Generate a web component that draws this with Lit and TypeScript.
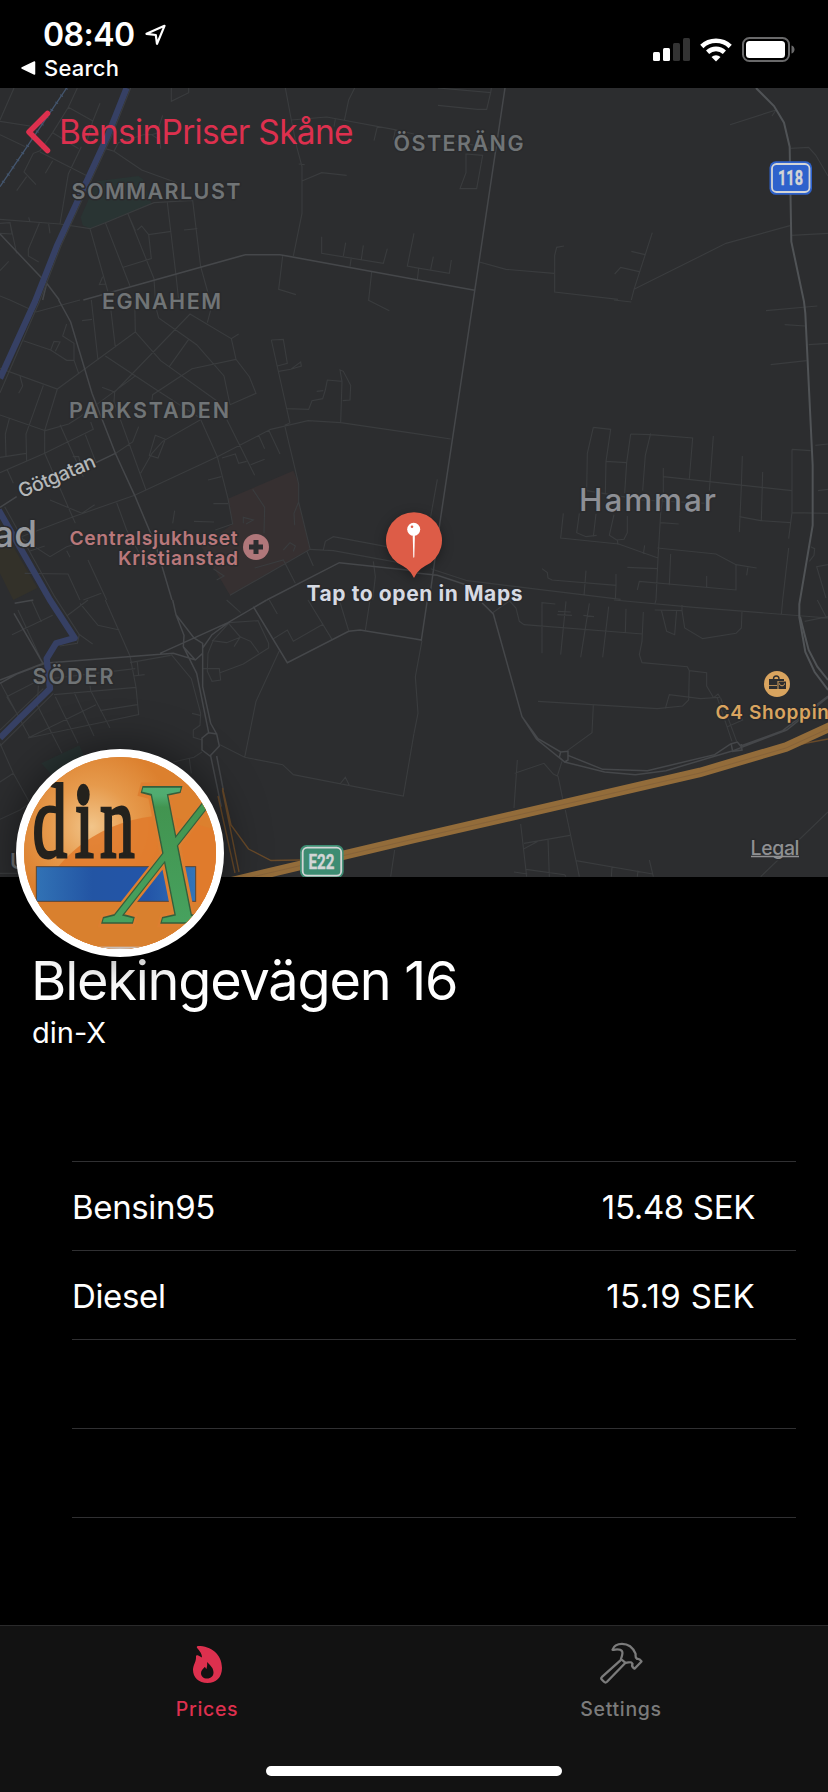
import { LitElement, html, svg, css } from "lit";
import { customElement, state } from "lit/decorators.js";

/* Road geometry, stored per map tile. Each tile is 414x300 px, drawn at a third of its own units. */
interface Tile {
  x: number;
  y: number;
  minor: string;
  major: string;
}

const TILES: Tile[] = [
  {
    x: 0,
    y: 0,
    minor:
      "M42 264L0 360 M232 264L205 322L158 398L120 452L100 460L72 516L108 554 M205 322L280 364 M300 310L278 364L262 420 M158 398L236 446 M0 364L90 378 M0 404L76 440 M120 456L262 528 M158 482L136 520 M80 530L50 572 M244 440L205 522L180 672 M0 658L180 672L270 686L316 668L462 608L578 601 M488 346L470 400L455 404L480 420L482 446 M430 404L455 404 M342 454L355 428L430 404 M316 446L342 454L425 510L530 548 M514 264L514 304L566 278L566 264 M270 686L324 876 M316 668L390 858 M384 642L462 836L466 900 M502 608L528 826L536 900 M578 601L602 800L630 900 M412 690L425 678L446 704L514 694 M446 704L454 776L370 802 M406 692L384 642 M552 690L592 686 M118 670L85 748L85 768L116 786 M86 652L90 666 M146 672L150 700 M0 670L30 668L36 702L0 700 M30 668L50 760 M26 784L0 812 M308 830L298 854L318 852 M0 888L30 900 M856 264L874 360L890 440L906 500L906 640L880 768 M896 492L914 494 M906 543L965 518L1040 526 M874 360L980 351L1180 388L1242 402 M1064 264L1046 300L1033 362 M1132 380L1122 422 M1006 358L1002 380 M1186 390L1180 420 M848 768L836 868L888 884 M965 710L965 760L1150 790L1162 746 M1037 728L1030 768 M1090 736L1084 778 M1054 772L1050 800 M1115 816L1106 900 M1242 700L1222 798L1242 802",
    major: "M0 702L140 850L178 900 M140 850L128 900 M250 900L736 764L840 764L1242 838",
  },
  {
    x: 414,
    y: 0,
    minor:
      "M72 264L230 278L232 264 M230 278L218 328L190 328L72 316 M0 408L100 420L232 446 M156 462L206 466L188 566L138 566L156 518Z M0 802L106 820L112 780 M58 770L50 808 M14 804L10 840 M196 786L276 808L420 820 M450 738L428 742L422 766L422 876L612 898 M715 698L660 868L652 900 M652 754L693 764 M602 822L620 802L676 815 M660 868L936 730L1128 677 M1132 706L1242 700 M948 374L1086 330L1074 348 M1130 445L1184 442L1205 465L1242 528",
    major: "M273 264L178 900 M0 838L182 871",
  },
  {
    x: 0,
    y: 300,
    minor:
      "M0 345L136 392L206 372L238 352L408 226 M0 205L172 267L406 96L404 0 M172 267L134 392L134 460 M130 256L78 402L80 484 M28 356L16 402L18 470 M0 472L78 460 M0 518L134 460L280 388L272 366 M240 0L108 36 M274 0L294 180 M332 24L346 142 M406 96L482 182L650 302 M70 122L152 150L200 181L222 181L236 220 M222 181L222 130L188 108L200 72 M152 150L162 124L180 126L166 154 M60 228L68 258L56 280 M246 62L276 58 M306 262L344 276L570 42L694 116L716 102 M466 16L476 54L590 134L672 228L690 314 M694 116L708 178L748 230L768 280L690 314 M708 178L576 206L458 284L456 300 M566 118L508 200 M316 168L470 270L600 354 M600 360L488 424L456 460L422 520 M466 406L496 418L474 474L448 466Z M344 276L342 306L438 570 M416 380L398 426L344 462 M640 0L622 68 M180 374L250 530 M134 460L226 670 M256 404L288 488 M218 470L236 470L240 486 M22 510L40 550 M404 586L652 470L812 388L924 362L1022 368L1242 400 M404 586L220 650L60 712 M600 354L652 470L684 596 M680 358L764 526 M752 494L794 478 M666 474L706 462L716 490L740 484 M624 540L664 530 M640 611L684 611 M776 406L794 446 M806 390L840 462 M854 376L868 370 M814 120L850 118L862 190L832 198 M814 120L870 370 M836 214L872 208L902 186L904 198L872 208 M858 326L926 328L936 302L968 296L976 270L982 240L1026 244L1020 210L1030 214L1052 256L1050 300L1028 302 M1026 244L1022 368 M950 274L970 272 M854 376L896 552L896 606L882 640L884 676 M896 606L930 746 M758 568L794 622L792 700 M684 596L698 672L646 690 M582 664L642 666 M524 632L518 670 M350 608L380 690L440 800 M730 670L730 652L760 660L738 672 M850 750L870 728L886 738L880 754 M764 804L850 780L886 850 M690 886L930 748L1000 752L1242 796 M970 750L976 724L1000 710L1160 740 M920 752L940 798 M1120 784L1126 830L1118 900 M60 712L150 770L200 740L240 728 M74 820L204 822L240 900 M88 754L134 738 M150 600L246 640L284 614 M200 752L210 772 M304 880L250 900 M640 806L672 828L650 840 M1104 0L1168 32 M30 0L108 36 M264 780L320 900",
    major:
      "M176 0L212 66L276 280L346 460L404 586L468 738L516 900 M288 488L346 460 M0 622L50 590 M800 900L1018 788L1242 812",
  },
  {
    x: 414,
    y: 300,
    minor:
      "M600 0L652 6 M1056 32L1210 18 M1112 74L1174 78 M1184 134L1242 130 M1070 194L1178 182 M1204 436L1242 432 M1212 572L1242 568 M0 400L110 417 M70 538L50 650 M538 382L590 388L576 484L574 580 M538 382L520 460L518 572L640 592 M576 484L638 488 M650 402L710 404L836 414L826 536 M650 402L638 488L632 580 M710 400L694 466L686 572 M748 504L748 580L740 640L732 775L726 900 M748 530L1134 572 M898 408L886 572 M985 468L982 560L976 696 M1046 516L1042 662 M976 650L1040 662L1130 668 M740 668L794 672 M1134 448L1190 452 M1134 448L1134 638L1124 716 M1134 638L1242 640 M1124 744L1106 900 M448 640L440 714L614 732L732 774 M496 640L488 698L516 710L548 706 M546 642L538 710 M600 644L586 706L608 720L630 718L640 698L640 648 M610 720L612 734 M692 736L688 762 M640 802L732 806 M730 744L906 762L966 794L1028 804 M1002 800L998 826 M966 794L966 870L676 844L670 870 M770 762L766 856 M878 828L878 864 M384 806L400 818L402 834L414 840L606 856L604 900 M516 812L510 888 M606 822L606 856 M50 806L160 842L620 898 M1190 740L1202 746L1200 766L1186 784 M1242 794L1208 800L1236 894 M680 600L880 610",
    major: "M178 0L78 666L46 900 M0 818L70 826L160 856",
  },
  {
    x: 0,
    y: 600,
    minor:
      "M94 0L124 66 M36 104L158 46 M200 48L264 0 M240 10L294 76L358 90 M316 0L390 168L408 262L416 344L84 414 M236 102L278 132 M54 30L120 172 M390 188L512 166 M400 228L434 224 M412 186L416 228 M162 284L408 262 M270 256L272 272L330 384 M300 332L412 314 M222 276L282 408 M166 290L234 430 M118 200L112 316L186 460 M0 246L90 414 M20 290L118 240L406 206 M288 314L84 414 M60 356L20 290 M0 430L40 520L90 610 M40 520L0 546 M0 658L60 630L90 610 M514 164L574 236L602 340L600 376L580 390L580 412L606 420 M576 340L600 346 M606 206L658 206L662 240L636 244L622 214L624 160L640 120L688 68L774 62L806 130L806 144L730 192L660 218 M684 68L720 110L752 124L776 158 M636 122L680 128L720 112L702 140 M680 0L722 38 M808 0L832 42 M818 118L862 90L880 124L970 72 M924 0L996 118 M1018 0L1046 92 M1110 0L1096 92 M838 152L768 304L734 472 M660 434L734 472L848 494L880 524L1210 588L1242 400 M1020 552L1036 532L1048 556 M606 456L582 472L520 486 M568 476L574 520 M1184 750L1172 830 M0 820L60 820",
    major:
      "M42 40L130 192 M0 240L130 190L520 160L586 180L608 160L608 130L582 114L528 44L518 0 M528 44L552 106L550 140L586 180 M480 160L684 68L800 0 M608 144L636 104L688 66 M550 140L590 220L626 398L606 414L606 450L630 468L658 438L650 402L626 398 M608 160L608 260L632 370L650 402 M632 468L664 620 M650 468L670 570 M760 20L862 188L1046 94L1080 90L1242 116 M100 0L44 10 M0 250L50 222L136 190",
  },
  {
    x: 414,
    y: 600,
    minor:
      "M0 400L12 340L4 230L24 122 M284 0L306 24L316 64L330 74L686 102 M236 38L290 0 M384 160L384 8L424 12 M456 4L440 164 M526 10L500 172 M584 20L566 172 M636 26L634 98 M688 36L684 124L676 164L684 188L820 200L826 212L878 218L878 258L898 292 M432 34L470 36 M430 44L474 46 M508 46L540 50 M600 0L840 22L1242 54 M722 30L804 32L812 84L866 116L966 100L982 84L984 34 M742 30L758 94L782 104L788 30 M804 16L804 32 M726 0L722 14 M1106 0L1102 44 M1210 0L1236 50 M826 212L824 300L806 318L730 326L372 304 M538 314L534 398L460 452 M754 326L766 284L860 296L918 292L912 282L900 292 M910 294L954 424 M920 294L968 424 M940 380L986 360L974 344 M300 624L310 480 M302 520L390 490L418 522L430 528L444 484 M432 528L446 596 M454 630L496 830 M320 672L338 830 M330 730L468 706 M330 746L372 724 M402 718L406 830 M300 816L340 822 M336 808L452 824L456 830 M486 782L716 822 M594 802L592 830 M706 780L718 830 M672 812L670 830 M1040 830L1242 636 M1172 64L1242 50",
    major:
      "M204 8L238 42L324 350L372 416L440 456L462 454L462 480L452 486L436 472L440 456 M324 350L368 418L452 486L572 516L664 524L756 512L952 454L1118 390L1242 292 M462 466L566 508L700 512L902 464L950 432L970 426L980 438L1106 392L1242 288 M952 434L956 454L984 450L982 432 M40 0L22 120L0 116",
  },
];

@customElement("station-map")
class StationMap extends LitElement {
  static styles = css`
    :host {
      display: block;
      height: 789px;
      overflow: hidden;
      background: #2c2d2f;
    }
    svg {
      display: block;
    }
    text {
      font-family: Inter, "Liberation Sans", sans-serif;
    }
    .minor {
      fill: none;
      stroke: #3a3c3e;
      stroke-width: 3.4;
    }
    .major {
      fill: none;
      stroke: #45474a;
      stroke-width: 4.5;
    }
    .trunk {
      fill: none;
      stroke: #505356;
      stroke-width: 6;
    }
    .water {
      fill: none;
      stroke: #364064;
      stroke-linejoin: round;
    }
    .motorway {
      fill: none;
      stroke: #936c3a;
    }
    .ramp {
      fill: none;
      stroke: #694a29;
      stroke-width: 1.4;
    }
    .area {
      font-size: 21.5px;
      font-weight: 600;
      fill: #707476;
    }
    .halo {
      paint-order: stroke;
      stroke: #292a2c;
      stroke-width: 3px;
      stroke-linejoin: round;
    }
    .town {
      font-size: 31.5px;
      font-weight: 500;
      fill: #8d8f95;
    }
    .city {
      font-size: 37px;
      font-weight: 500;
      fill: #96999e;
    }
    .street {
      font-size: 19.5px;
      font-weight: 500;
      fill: #b4b7b9;
    }
    .hospital {
      font-size: 19.3px;
      font-weight: 600;
      fill: #b9787b;
    }
    .shop {
      font-size: 19px;
      font-weight: 600;
      fill: #d9a45f;
    }
    .callout {
      font-size: 21px;
      font-weight: 700;
      fill: #d6dae3;
    }
    .legal {
      font-size: 19.5px;
      font-weight: 500;
      fill: #8f9092;
    }
    .sign {
      font-family: "Roboto", Inter, sans-serif;
      font-size: 20px;
      font-weight: 700;
      fill: #d3d5d6;
      stroke: #d3d5d6;
      stroke-width: 0.4px;
    }
    .pin {
      filter: drop-shadow(0 3px 6px rgba(0, 0, 0, 0.35));
    }
  `;

  private label(cls: string, text: string, x: number, y: number, length: number) {
    return svg`<text class="halo ${cls}" x=${x} y=${y} textLength=${length}>${text}</text>`;
  }

  render() {
    return html`
      <svg width="828" height="789" viewBox="0 88 828 789">
        <g transform="scale(.33333)">
          <path fill="#293433" d="M290 544L415 528L428 536L455 612L272 686L248 676L242 652Z" />
          <path fill="#363031" d="M684 1496L880 1412L896 1450L896 1506L930 1648L690 1786L604 1640L698 1572Z" />
          <path fill="#333129" d="M0 1570L40 1640L112 1764L40 1800L0 1720Z" />
          <path fill="#293433" d="M124 2290L238 2236L262 2290L160 2330Z" />
        </g>
        ${TILES.map(
          (t) => svg`
            <g transform="translate(${t.x} ${t.y}) scale(.33333)">
              <path class="minor" d=${t.minor} />
              <path class="major" d=${t.major} />
            </g>`
        )}
        <g transform="scale(.33333)">
          <path fill="none" stroke="#44566f" stroke-width="4" d="M200 264L100 412L0 560" />
          <path fill="none" stroke="#44566f" stroke-width="10" stroke-dasharray="3 23" d="M200 264L100 412L0 560" />
          <path class="water" stroke-width="19" d="M380 264L322 410L172 735L105 905L0 1135" />
          <path class="minor" stroke="#45474a" d="M392 264L334 410L184 735L118 905L0 1178" />
          <path class="water" stroke-width="19" d="M-4 1530L150 1800L224 1914L168 1930L140 1976L150 2066L60 2154L0 2214" />
          <path class="minor" d="M14 1520L164 1790L238 1904L232 1930L180 1938 M160 2080L0 2238 M0 2190L130 2066" />
          <path class="trunk" d="M2268 264L2322 318L2352 368L2369 440L2374 725L2412 905L2416 940L2438 1395L2438 1576L2398 1812L2398 1852L2416 1956L2444 2016L2484 2070" />
          <path class="trunk" stroke-width="4" d="M2400 1850L2426 1950L2452 2000L2484 2040" />
        </g>
        <path class="ramp" d="M222.500 788L231 825L248.500 849L271 860.500L300 860 M218 796L235 873 M222.500 790L239 872 M796 745L828 739" />
        <path class="motorway" stroke-width="9.500" d="M222 884L414 838.500L700 772.500L786 747L832 726" />
        <path fill="none" stroke="#86633a" stroke-width="1" d="M222 884L414 839L700 773L786 748L832 727" />

        ${this.label("area", "ÖSTERÄNG", 393.5, 150.5, 130)}
        ${this.label("area", "SOMMARLUST", 71.5, 199, 169)}
        ${this.label("area", "EGNAHEM", 102, 308.7, 119)}
        ${this.label("area", "PARKSTADEN", 69, 418, 160)}
        ${this.label("area", "SÖDER", 32.5, 683.7, 81)}
        ${this.label("area", "U", 10, 868.7, 17)}
        ${this.label("town", "Hammar", 579, 510.7, 137)}
        ${this.label("city", "ad", -7, 546.7, 44)}
        <g transform="translate(21.500 498.200) rotate(-22.700)">
          ${this.label("street", "Götgatan", 0, 0, 82)}
        </g>
        ${this.label("hospital", "Centralsjukhuset", 69.5, 545, 168)}
        ${this.label("hospital", "Kristianstad", 118, 564.5, 120)}
        <circle cx="256" cy="547" r="13" fill="#b0777a" />
        <path fill="#2c2d2f" d="M253.500 540h5v4.500h4.500v5h-4.500v4.500h-5v-4.500h-4.500v-5h4.500z" />

        <circle cx="777" cy="684" r="13" fill="#d9a45f" />
        <g fill="#2c2d2f">
          <path d="M769 679h15v2h-6.500v8H769z" />
          <path d="M778.500 681.500h7.500v7.500h-7.500z" />
        </g>
        <path fill="none" stroke="#2c2d2f" stroke-width="1.400" d="M773.500 679c0-4 5.500-4 5.500 0" />
        <path stroke="#d9a45f" stroke-width=".8" d="M769 685.500h8" />
        <path fill="none" stroke="#d9a45f" stroke-width="1" d="M779.500 683.500c0 3 5 3 5 0" />
        ${this.label("shop", "C4 Shopping", 715.5, 719.3, 126)}

        <g>
          <rect x="769.500" y="161.300" width="42.500" height="33.500" rx="6.500" fill="#2e62cc" />
          <rect x="772" y="164" width="37.500" height="28" rx="4.500" fill="none" stroke="#d3d5d6" stroke-width="1.800" />
          <text class="sign" x="778" y="185" textLength="25" lengthAdjust="spacingAndGlyphs">118</text>
        </g>
        <g>
          <rect x="300" y="845" width="43.700" height="33" rx="6.500" fill="#3d8c72" />
          <rect x="302.700" y="847.700" width="38.500" height="28" rx="4.500" fill="none" stroke="#d3d5d6" stroke-width="1.800" />
          <text class="sign" x="308.500" y="869" textLength="26" lengthAdjust="spacingAndGlyphs">E22</text>
        </g>

        <g class="pin">
          <path fill="#dd5c47" d="M414 578C411 572 408 569 403 566A28 28 0 1 1 425 566C420 569 417 572 414 578Z" />
          <circle cx="413.700" cy="529.300" r="6.500" fill="#fff" />
          <path fill="#fff" d="M412.700 535h2.200l-.6 22-.5 1-.5-1z" />
          <circle cx="412" cy="526.800" r="1.300" fill="#dd5c47" />
        </g>
        ${this.label("callout", "Tap to open in Maps", 306.5, 601, 216)}
        ${this.label("legal", "Legal", 750.5, 855, 49)}
        <path stroke="#8f9092" stroke-width="1.500" d="M751 856.500h48" />
      </svg>
    `;
  }
}

@customElement("brand-badge")
class BrandBadge extends LitElement {
  static styles = css`
    :host {
      display: block;
      box-sizing: border-box;
      width: 208px;
      height: 208px;
      border: 8px solid #fff;
      border-radius: 50%;
      overflow: hidden;
      box-shadow: 0 0 44px rgba(0, 0, 0, 0.5);
      background: #db7d2c;
    }
    svg {
      display: block;
    }
    .din {
      font-family: "Liberation Serif", serif;
      font-size: 315px;
      fill: #24221d;
      stroke: #24221d;
      stroke-width: 9;
    }
    .cross {
      font-family: "Liberation Serif", serif;
      font-size: 624px;
    }
  `;

  render() {
    return html`
      <svg width="192" height="192" viewBox="72 81 576 576">
        <defs>
          <radialGradient id="glow" gradientUnits="userSpaceOnUse" cx="275" cy="290" r="250">
            <stop offset="0" stop-color="#f2c58a" />
            <stop offset=".5" stop-color="#e69a4c" />
            <stop offset="1" stop-color="#dc802e" />
          </radialGradient>
          <linearGradient id="bar">
            <stop offset="0" stop-color="#3172b5" />
            <stop offset=".35" stop-color="#2355a4" />
            <stop offset=".7" stop-color="#2355a8" />
            <stop offset="1" stop-color="#3375b8" />
          </linearGradient>
          <linearGradient id="leaf" x2="0" y2="1">
            <stop offset="0" stop-color="#5cbd82" />
            <stop offset=".25" stop-color="#50ab70" />
            <stop offset=".3" stop-color="#429450" />
            <stop offset="1" stop-color="#49a764" />
          </linearGradient>
        </defs>
        <rect x="72" y="81" width="576" height="576" fill="url(#glow)" />
        <path fill="#e07a2c" opacity=".85" d="M120 500C170 380 300 265 500 255L648 300V657H120Z" />
        <path fill="#d9802e" d="M72 520H648V657H72Z" />
        <rect x="72" y="650" width="576" height="8" fill="#c9bdb6" />
        <rect x="109" y="410" width="478" height="104" fill="url(#bar)" stroke="#5a4634" stroke-width="3" />
        <g transform="scale(.66 1)">
          <text class="din" x="148 340 455" y="381">din</text>
        </g>
        <ellipse cx="250" cy="194" rx="19" ry="33" fill="#24221d" />
        <g transform="translate(296 580) skewX(-15) scale(.69 1)">
          <text class="cross" fill="#dd7f31" stroke="#dd7f31" stroke-width="26">X</text>
          <text class="cross" fill="url(#leaf)" stroke="#355f3c" stroke-width="5">X</text>
        </g>
      </svg>
    `;
  }
}

@customElement("app-root")
class AppRoot extends LitElement {
  static styles = css`
    :host {
      display: flex;
      flex-direction: column;
      width: 828px;
      height: 1792px;
      overflow: hidden;
      background: #000;
      color: #fff;
      font-family: Inter, "Liberation Sans", sans-serif;
    }
    svg {
      display: block;
    }
    .status {
      display: flex;
      justify-content: space-between;
      height: 88px;
      flex: none;
    }
    .left {
      display: flex;
      flex-direction: column;
      padding: 15px 0 0 21px;
    }
    .clock {
      display: flex;
      align-items: center;
      gap: 10px;
      padding-left: 22px;
      font-size: 32px;
      line-height: 40px;
      font-weight: 600;
      letter-spacing: -0.5px;
    }
    .return {
      display: flex;
      align-items: center;
      gap: 8px;
      margin-top: -1px;
      font-size: 22px;
      line-height: 28px;
      font-weight: 450;
      letter-spacing: 0.2px;
    }
    .right {
      display: flex;
      align-items: center;
      gap: 10px;
      padding: 11px 33px 0 0;
    }
    .hero {
      position: relative;
      flex: none;
    }
    .back {
      position: absolute;
      left: 25px;
      top: 22px;
      display: flex;
      align-items: center;
      gap: 8px;
      color: #dd304e;
      font-size: 33.5px;
      line-height: 44px;
      letter-spacing: -0.72px;
    }
    .station {
      display: flex;
      flex-direction: column;
      padding: 0 32px;
      margin-top: -128px;
      flex: none;
    }
    brand-badge {
      position: relative;
      margin-left: -16px;
    }
    .title {
      margin: -8px 0 0 -1px;
      font-size: 54px;
      line-height: 64px;
      font-weight: 400;
      letter-spacing: -1.2px;
    }
    .brand {
      margin: 0;
      font-size: 29px;
      line-height: 36px;
      padding-top: 2px;
    }
    .prices {
      margin: 110px 32px 0 72px;
      flex: 1;
      min-height: 0;
    }
    .row {
      box-sizing: border-box;
      display: flex;
      justify-content: space-between;
      align-items: center;
      height: 89px;
      padding: 2px 41px 0 0;
      border-top: 1px solid #303032;
      font-size: 33px;
      letter-spacing: -0.35px;
    }
    .loose {
      letter-spacing: 0.35px;
    }
    .tabs {
      flex: none;
      box-sizing: border-box;
      height: 167px;
      display: grid;
      grid-template: 1fr auto / 1fr 1fr;
      border-top: 1px solid #2a2a2b;
      background: #121212;
    }
    .tab {
      display: flex;
      flex-direction: column;
      align-items: center;
      padding-top: 16px;
      gap: 12px;
      font-size: 19.5px;
      line-height: 26px;
      font-weight: 450;
      letter-spacing: 0.7px;
      color: #7b7b7b;
    }
    .active {
      color: #dd304e;
    }
    .home {
      grid-column: 1 / 3;
      justify-self: center;
      width: 296px;
      height: 10px;
      margin-bottom: 16px;
      border-radius: 5px;
      background: #fff;
    }
  `;

  @state() prices = [
    { fuel: "Bensin95", price: "15.48 SEK" },
    { fuel: "Diesel", price: "15.19 SEK" },
    { fuel: "", price: "" },
    { fuel: "", price: "" },
    { fuel: "", price: "" },
  ];

  render() {
    return html`
      <header class="status">
        <div class="left">
          <div class="clock">
            <span>08:40</span>
            <svg width="22" height="22" viewBox="0 0 22 22">
              <path d="M1.500 9.800L19.500 1.800L12 19.800L10.800 11Z" fill="none" stroke="#fff" stroke-width="2.200" stroke-linejoin="round" />
            </svg>
          </div>
          <div class="return">
            <svg width="15" height="14" viewBox="0 0 15 14">
              <path d="M1 7L13.500 1V13Z" fill="#fff" stroke="#fff" stroke-width="1.500" stroke-linejoin="round" />
            </svg>
            <span>Search</span>
          </div>
        </div>
        <div class="right">
          <svg width="37" height="24" viewBox="0 0 37 24">
            <rect x="0" y="14" width="7" height="9" rx="1.500" fill="#fff" />
            <rect x="10" y="10" width="7" height="13" rx="1.500" fill="#fff" />
            <rect x="20" y="5" width="7" height="18" rx="1.500" fill="#333" />
            <rect x="30" y="0" width="7" height="23" rx="1.500" fill="#333" />
          </svg>
          <svg width="32" height="24" viewBox="0 0 32 24">
            <g fill="none" stroke="#fff" stroke-width="4.600">
              <path d="M1.800 8.500A20.500 20.500 0 0 1 30.200 8.500" />
              <path d="M7.600 14.200A12.300 12.300 0 0 1 24.400 14.200" />
            </g>
            <path fill="#fff" d="M16 23.500L11.500 19A6.400 6.400 0 0 1 20.500 19Z" />
          </svg>
          <svg width="53" height="25" viewBox="0 0 53 25">
            <rect x="1" y="1" width="46" height="23" rx="6.500" fill="none" stroke="#69696a" stroke-width="2" />
            <rect x="4" y="4" width="39" height="17" rx="3.500" fill="#fff" />
            <path fill="#69696a" d="M49.500 8.500C53.500 9.500 53.500 15.500 49.500 16.500Z" />
          </svg>
        </div>
      </header>

      <section class="hero">
        <station-map></station-map>
        <div class="back">
          <svg width="26" height="44" viewBox="0 0 26 44">
            <path d="M22.500 3.500L4 22L22.500 40.500" fill="none" stroke="#dd304e" stroke-width="5.500" stroke-linecap="round" stroke-linejoin="round" />
          </svg>
          <span>BensinPriser Skåne</span>
        </div>
      </section>

      <section class="station">
        <brand-badge></brand-badge>
        <h1 class="title">Blekingevägen 16</h1>
        <p class="brand">din-X</p>
      </section>

      <section class="prices">
        ${this.prices.map(
          (p, i) => html`
            <div class="row">
              <span>${p.fuel}</span>
              <span class=${i === 1 ? "loose" : ""}>${p.price}</span>
            </div>`
        )}
      </section>

      <nav class="tabs">
        <div class="tab active">
          <svg width="44" height="42" viewBox="0 0 44 42">
            <path
              fill="#dd304e"
              fill-rule="evenodd"
              d="M12 5.800C11.500 4.900 12 4 13 4C26 4 37 12 37 26C37 35.500 31 41 22.500 41C13.500 41 8 35 8 28C8 23 11.500 19.500 11 14.500C11 13.300 12.200 12.800 13.200 13.500L17 15.500C17 11.500 14.500 9 12 5.800ZM22 20C22.500 23 22 24 21.500 27C20.700 26.500 20.200 25.800 20 24.700C18 26.500 16 28.500 16 31C16 34.500 18.500 36.500 22 36.500C26 36.500 28.500 34 28.500 30.500C28.500 26 25.500 23.500 22 20Z"
            />
          </svg>
          <span>Prices</span>
        </div>
        <div class="tab">
          <svg width="46" height="42" viewBox="0 0 46 42">
            <g transform="translate(2 0) scale(1 .97)" fill="none" stroke="#7b7b7b" stroke-width="2.300" stroke-linejoin="round" stroke-linecap="round">
              <path d="M21 18.500L2 36C1 37 1 38 2 39L4 41C5 42 6 42 7 41L25.500 21.500" />
              <path d="M12.500 8C14 3.500 18.500 2 22 2C28 2 33 6 35.500 12C36 14 34.500 15.500 37 17.500C38.500 17 39.500 17 41.500 20L34.500 27.500C32 26 31.500 24.500 32.500 22.500C31 20 30.500 21 25.500 21.500L21 17.500C23 12 23 11 22 9.500C20 6.500 16 8 12.500 8Z" />
            </g>
          </svg>
          <span>Settings</span>
        </div>
        <div class="home"></div>
      </nav>
    `;
  }
}
